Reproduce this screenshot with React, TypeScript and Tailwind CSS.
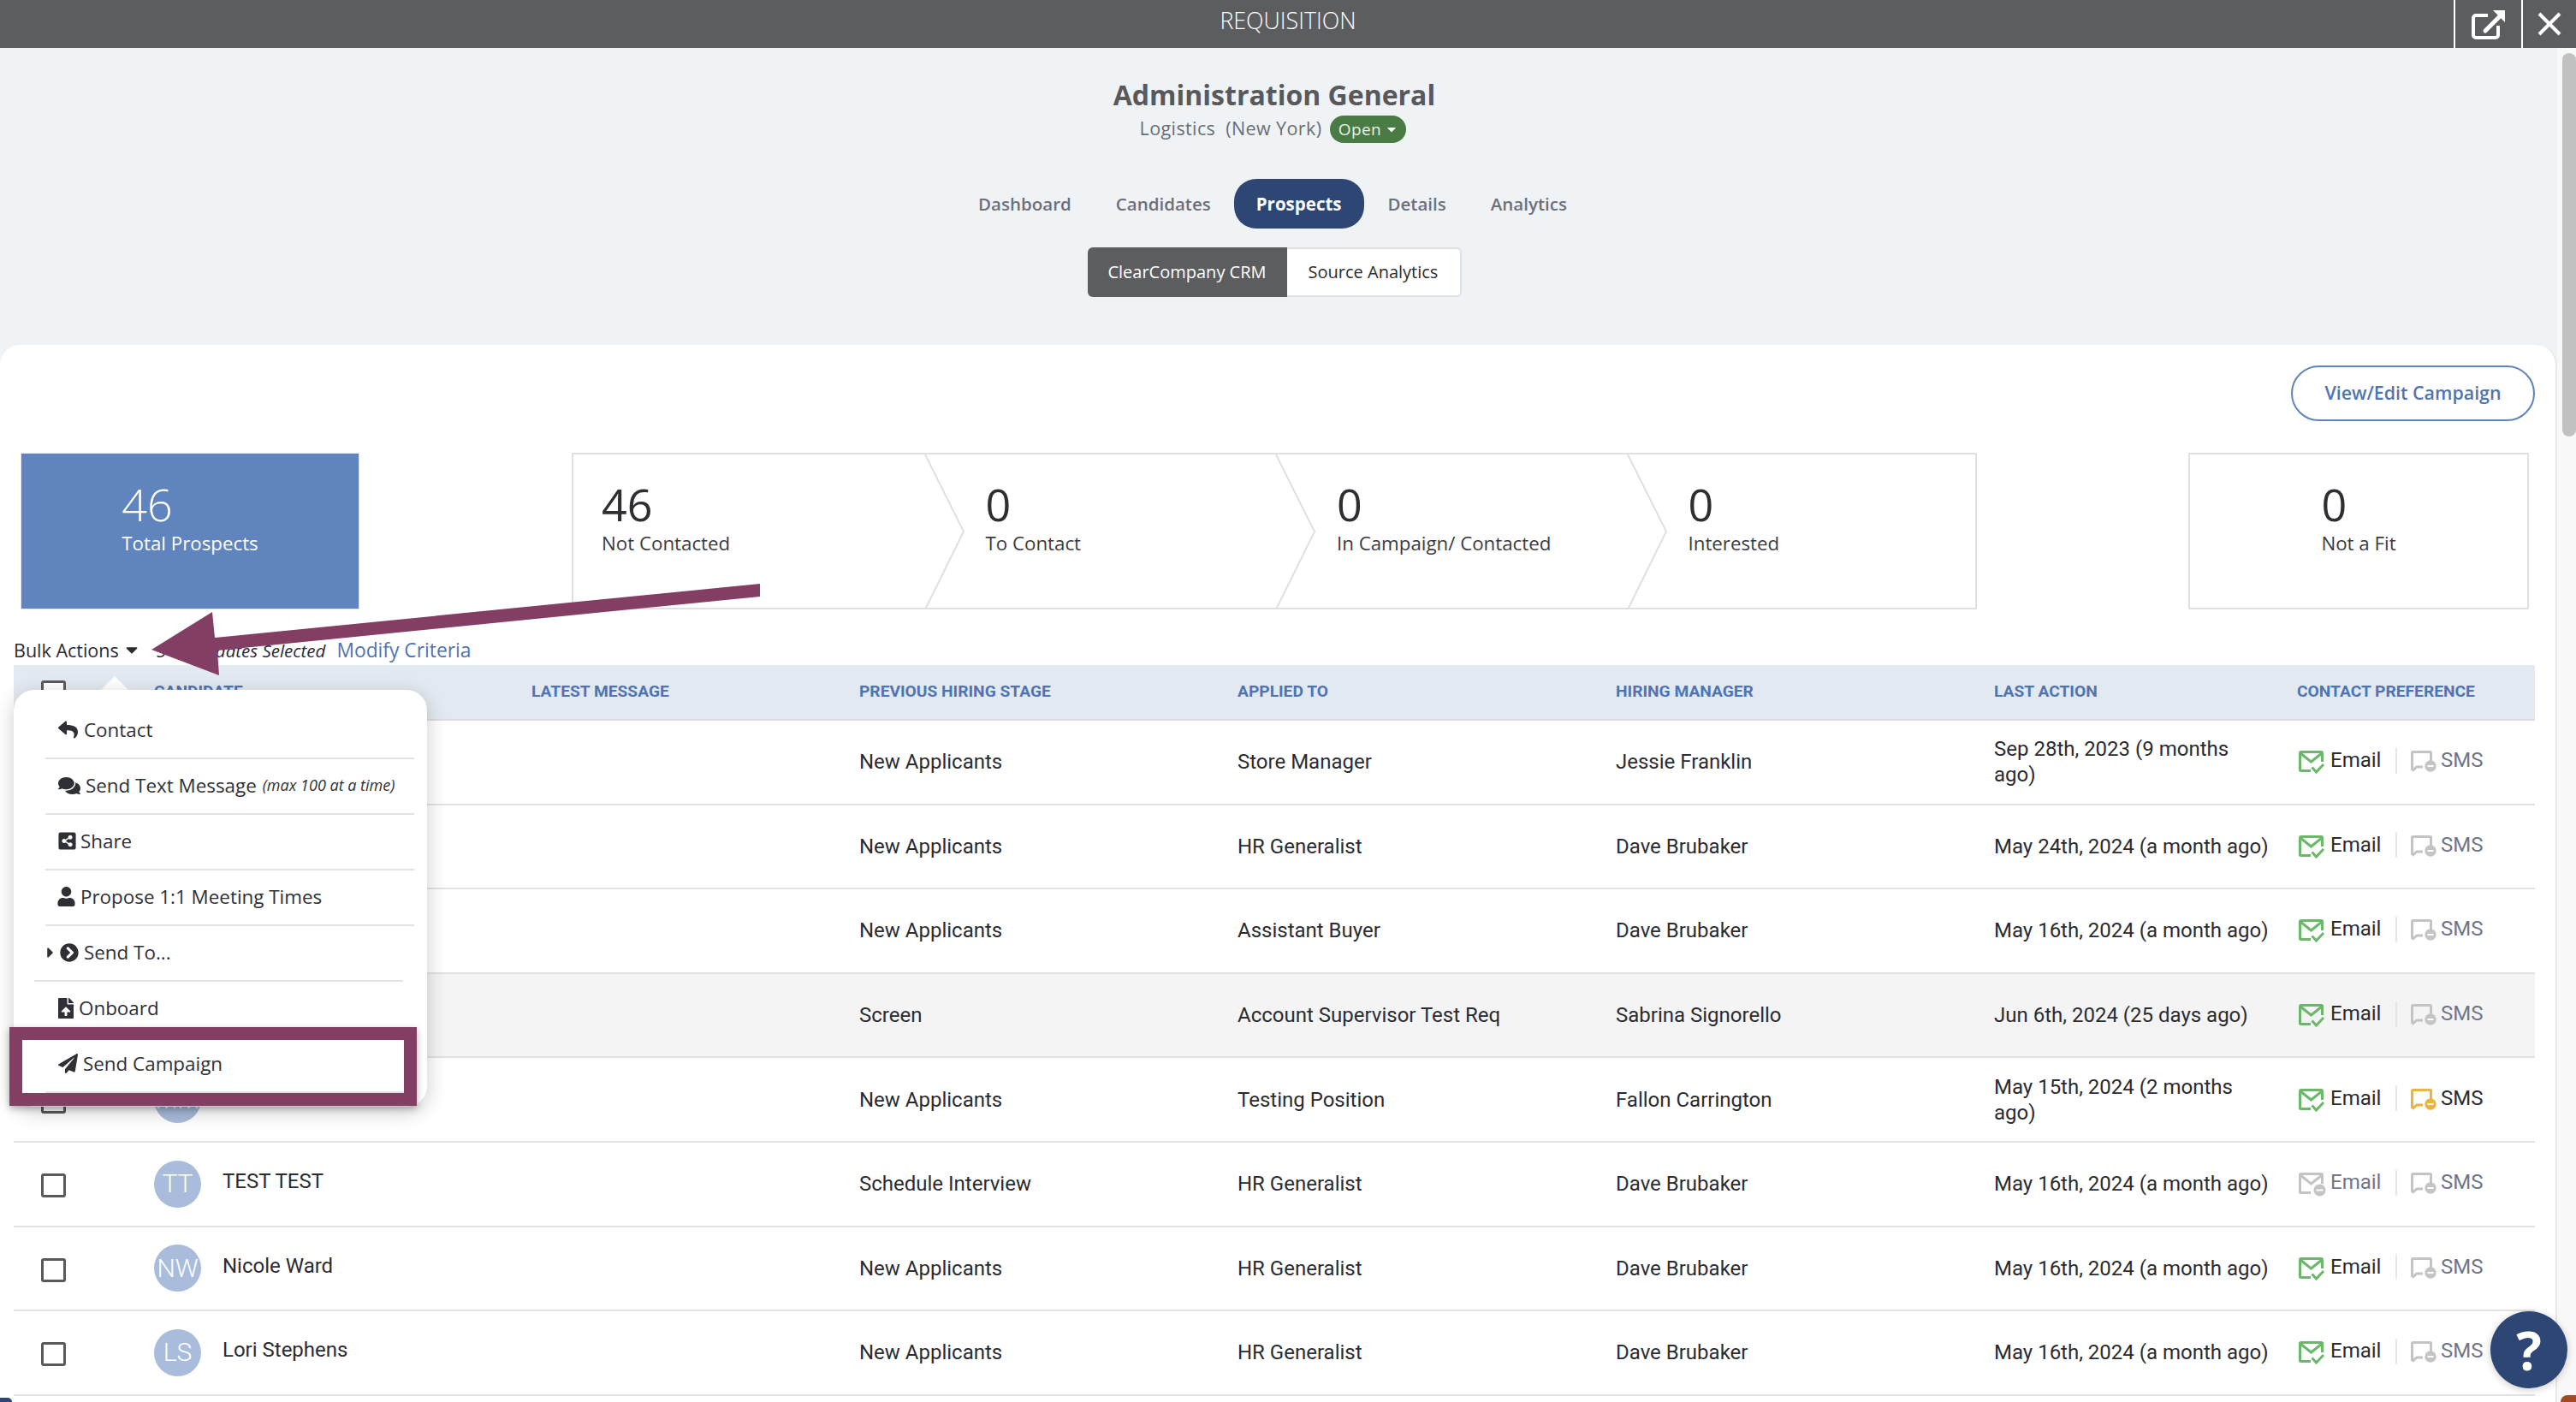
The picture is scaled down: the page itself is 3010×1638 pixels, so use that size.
import React from "react";
import {
  FaReply,
  FaComments,
  FaShareAltSquare,
  FaUser,
  FaChevronCircleRight,
  FaFileUpload,
  FaPaperPlane,
  FaCaretDown,
  FaCaretRight,
} from "react-icons/fa";

type Row = {
  initials?: string;
  name?: string;
  stage: string;
  applied: string;
  manager: string;
  date: string;
  emailOn: boolean;
  sms: "off" | "warn";
  muted?: boolean;
};

const rows: Row[] = [
  { stage: "New Applicants", applied: "Store Manager", manager: "Jessie Franklin", date: "Sep 28th, 2023 (9 months ago)", emailOn: true, sms: "off" },
  { stage: "New Applicants", applied: "HR Generalist", manager: "Dave Brubaker", date: "May 24th, 2024 (a month ago)", emailOn: true, sms: "off" },
  { stage: "New Applicants", applied: "Assistant Buyer", manager: "Dave Brubaker", date: "May 16th, 2024 (a month ago)", emailOn: true, sms: "off" },
  { stage: "Screen", applied: "Account Supervisor Test Req", manager: "Sabrina Signorello", date: "Jun 6th, 2024 (25 days ago)", emailOn: true, sms: "off", muted: true },
  { initials: "MM", stage: "New Applicants", applied: "Testing Position", manager: "Fallon Carrington", date: "May 15th, 2024 (2 months ago)", emailOn: true, sms: "warn" },
  { initials: "TT", name: "TEST TEST", stage: "Schedule Interview", applied: "HR Generalist", manager: "Dave Brubaker", date: "May 16th, 2024 (a month ago)", emailOn: false, sms: "off" },
  { initials: "NW", name: "Nicole Ward", stage: "New Applicants", applied: "HR Generalist", manager: "Dave Brubaker", date: "May 16th, 2024 (a month ago)", emailOn: true, sms: "off" },
  { initials: "LS", name: "Lori Stephens", stage: "New Applicants", applied: "HR Generalist", manager: "Dave Brubaker", date: "May 16th, 2024 (a month ago)", emailOn: true, sms: "off" },
];

function EmailIcon({ on }: { on: boolean }) {
  const c = on ? "#6cb86a" : "#c4c4c4";
  return (
    <svg width="32" height="28" viewBox="0 0 32 28" fill="none" className="shrink-0 mt-[2px]">
      <path d="M14 23.5H2.5a1 1 0 0 1-1-1V2.5a1 1 0 0 1 1-1h24a1 1 0 0 1 1 1V13" stroke={c} strokeWidth="3" />
      <path d="M2 3l12.5 10L27 3" stroke={c} strokeWidth="3" />
      {on ? (
        <path d="M15.5 19.5l5 5.5 8.5-9" stroke={c} strokeWidth="3" />
      ) : (
        <>
          <circle cx="24.5" cy="20.5" r="7" fill={c} />
          <path d="M20.5 20.5h8" stroke="#fff" strokeWidth="2" />
        </>
      )}
    </svg>
  );
}

function SmsIcon({ warn }: { warn: boolean }) {
  const c = warn ? "#eab440" : "#c4c4c4";
  return (
    <svg width="30" height="26" viewBox="0 0 30 26" fill="none" className="shrink-0">
      <path d="M1.5 23V2.5a1 1 0 0 1 1-1h20a1 1 0 0 1 1 1V12" stroke={c} strokeWidth="3" />
      <path d="M1.5 23.5L7 19h7" stroke={c} strokeWidth="3" />
      <circle cx="23" cy="18" r="6.7" fill={c} />
      <path d="M19.5 18h7" stroke="#fff" strokeWidth="2" />
    </svg>
  );
}

function Row({ r }: { r: Row }) {
  return (
    <div
      className={`grid grid-cols-[164px_441px_383px_442px_442px_442px_354px_278px] h-[98.6px] items-center border-b-2 border-[#e2e2e2] font-['Roboto',sans-serif] text-[24px] leading-[30px] text-[#2a2c32] ${
        r.muted ? "bg-[#f4f4f4]" : ""
      }`}
    >
      <div className="pl-[32px] pt-[4px]">
        <div className="w-[29px] h-[28px] border-[3px] border-[#5a5a5a] rounded-[3px] bg-white" />
      </div>
      <div className="flex items-center">
        {r.initials ? (
          <div className="w-[55px] h-[55px] rounded-full bg-[#a9bcdb] text-white text-[30px] font-light flex items-center justify-center shrink-0 overflow-hidden">
            {r.initials}
          </div>
        ) : null}
        {r.name ? <span className="ml-[25px] mb-[6px]">{r.name}</span> : null}
      </div>
      <div />
      <div>{r.stage}</div>
      <div>{r.applied}</div>
      <div>{r.manager}</div>
      <div className="pr-[30px]">{r.date}</div>
      <div className="flex items-center pl-[2px]">
        <EmailIcon on={r.emailOn} />
        <span className={`ml-[5px] mb-[4px] w-[59px] ${r.emailOn ? "" : "text-[#707689]"}`}>Email</span>
        <div className="w-[2px] h-[30px] bg-[#e6e6e6] ml-[17px] mr-[16px] mb-[3px]" />
        <SmsIcon warn={r.sms === "warn"} />
        <span className={`ml-[5px] mb-[4px] ${r.sms === "warn" ? "" : "text-[#707689]"}`}>SMS</span>
      </div>
    </div>
  );
}

function Stage({ value, label, first, last }: { value: string; label: string; first?: boolean; last?: boolean }) {
  return (
    <div
      className={`relative ${first ? "w-[413px] pl-[33px]" : last ? "w-[405px] pl-[69px]" : "w-[411px] pl-[69px]"} h-full pt-[27px]`}
    >
      <div className="text-[52px] leading-[62px] text-[#2e2f33]">{value}</div>
      <div className="text-[22.3px] leading-[30px] text-[#3a3b40]">{label}</div>
      {last ? null : (
        <svg className={`absolute ${first ? "left-[410px]" : "left-[408px]"} top-0`} width="50" height="181" viewBox="0 0 50 181" fill="none">
          <path d="M1 0L46 90L1 181" stroke="#e0e0e0" strokeWidth="2" />
        </svg>
      )}
    </div>
  );
}

const menuBase = "flex items-center h-[65px] pb-[2px] border-b-2 border-[#e2e2e2] text-[22.4px] text-[#2e3036]";

export default function App() {
  return (
    <div className="relative w-[3010px] h-[1638px] overflow-hidden bg-[#eff3f6] font-['Open_Sans',sans-serif]">
      <header className="grid grid-cols-[1fr_auto_1fr] items-center h-14 bg-[#5c5d5f] text-white">
        <div />
        <div className="text-[26.8px] font-light mb-[8px]">REQUISITION</div>
        <div className="flex justify-end h-full">
          <button className="w-[79px] h-full border-l-2 border-white flex items-center justify-center">
            <svg width="40" height="35" viewBox="0 0 40 35" fill="none">
              <path d="M19 7H5a3 3 0 0 0-3 3v20a3 3 0 0 0 3 3h23a3 3 0 0 0 3-3V19" stroke="#fff" strokeWidth="4" />
              <path d="M16 25L33 8" stroke="#fff" strokeWidth="5" strokeLinecap="round" />
              <path d="M25 1h14v14z" fill="#fff" />
            </svg>
          </button>
          <button className="w-[64px] h-full border-l-2 border-white flex items-center justify-center">
            <svg width="28" height="28" viewBox="0 0 28 28" fill="none">
              <path d="M2 2l24 24M26 2L2 26" stroke="#fff" strokeWidth="4" />
            </svg>
          </button>
        </div>
      </header>

      <div className="flex h-[1582px]">
        <main className="w-[2988px] shrink-0">
          <section className="h-[347px] pr-[10px] pt-[33px] flex flex-col items-center">
            <h1 className="text-[32px] leading-[44px] font-bold text-[#58595b]">Administration General</h1>
            <div className="flex items-center h-[32px] mr-[3px] text-[21.5px] text-[#6b6e75] tracking-[0.4px]">
              <span className="whitespace-pre mt-[2px]">Logistics  (New York)</span>
              <span className="ml-[10px] mt-[4px] h-[32px] w-[89px] rounded-full bg-[#4a7b45] text-[#e8f2e6] text-[19px] flex items-center justify-center">
                Open
                <FaCaretDown className="ml-[4px] text-white" size={16} />
              </span>
            </div>
            <nav className="flex items-center mt-[44px] mr-[4px] h-[58px] text-[20.5px] font-semibold text-[#6c6f7a]">
              <a className="pl-[26px] pr-[26px]">Dashboard</a>
              <a className="pl-[26px] pr-[27px]">Candidates</a>
              <a className="px-[26px] h-full flex items-center rounded-[26px] bg-[#2d4674] text-white font-bold">Prospects</a>
              <a className="pl-[28px] pr-[26px]">Details</a>
              <a className="px-[26px]">Analytics</a>
            </nav>
            <div className="flex mt-[22px] h-[58px] text-[20px]">
              <button className="w-[233px] rounded-l-[6px] bg-[#5c5d5f] text-white">ClearCompany CRM</button>
              <button className="w-[204px] rounded-r-[6px] bg-white border-2 border-l-0 border-[#dfe1e3] text-[#2b2c30]">Source Analytics</button>
            </div>
          </section>

          <section className="h-[1235px] bg-white rounded-t-[24px] border-r-2 border-[#e8e8e8] pt-[24px]">
            <div className="flex justify-end pr-[24px]">
              <button className="w-[285px] h-[65px] rounded-full border-2 border-[#5f83bd] text-[21.4px] font-semibold text-[#4f74b3]">
                View/Edit Campaign
              </button>
            </div>

            <div className="flex h-[183px] mt-[37px] ml-[24px]">
              <div className="w-[396px] h-full bg-[#6084bd] border border-[#e0e4ea] text-white flex justify-center pt-[28px]">
                <div>
                  <div className="text-[52px] leading-[62px] font-light">46</div>
                  <div className="text-[22.3px] leading-[30px]">Total Prospects</div>
                </div>
              </div>
              <div className="flex w-[1642px] ml-[248px] h-full border-2 border-[#e0e0e0]">
                <Stage value="46" label="Not Contacted" first />
                <Stage value="0" label="To Contact" />
                <Stage value="0" label="In Campaign/ Contacted" />
                <Stage value="0" label="Interested" last />
              </div>
              <div className="w-[398px] ml-[247px] h-full border-2 border-[#e0e0e0] flex justify-center pt-[27px]">
                <div>
                  <div className="text-[52px] leading-[62px] text-[#2e2f33]">0</div>
                  <div className="text-[22.3px] leading-[30px] text-[#3a3b40]">Not a Fit</div>
                </div>
              </div>
            </div>

            <div className="flex items-end h-[65px] pl-[16px] pb-[2px] text-[21.5px] leading-[30px]">
              <span className="text-[#2a2c32]">Bulk Actions</span>
              <FaCaretDown className="ml-[4px] mb-[5px] text-[#2a2c32]" size={22} />
              <span className="ml-[18px] italic text-[20.5px] text-[#2a2c32]">5 Candidates Selected</span>
              <span className="ml-[13px] text-[22.8px] text-[#4f74b3]">Modify Criteria</span>
            </div>

            <div className="mx-[16px] w-[2946px]">
              <div className="grid grid-cols-[164px_441px_383px_442px_442px_442px_354px_278px] h-[65px] items-center bg-[#e3e9f0] border-b-2 border-[#d9dde2] font-['Roboto',sans-serif] text-[19.2px] font-bold text-[#4f74b3]">
                <div className="pl-[32px]">
                  <div className="w-[29px] h-[28px] border-[3px] border-[#5a5a5a] rounded-[3px] bg-white" />
                </div>
                <div>CANDIDATE</div>
                <div>LATEST MESSAGE</div>
                <div>PREVIOUS HIRING STAGE</div>
                <div>APPLIED TO</div>
                <div>HIRING MANAGER</div>
                <div>LAST ACTION</div>
                <div>CONTACT PREFERENCE</div>
              </div>
              {rows.map((r, i) => (
                <Row key={i} r={r} />
              ))}
            </div>
          </section>
        </main>
        <aside className="flex-1 bg-[#f8f8f8] pl-[6px] pt-[6px]">
          <div className="w-[16px] h-[448px] rounded-full bg-[#c1c1c1]" />
        </aside>
      </div>

      {/* dropdown menu */}
      <div className="absolute left-[118px] top-[790px] w-0 h-0 border-x-[16px] border-x-transparent border-b-[16px] border-b-white" />
      <div className="absolute left-[16px] top-[806px] w-[483px] h-[487px] bg-white rounded-[24px] shadow-[0_6px_24px_rgba(0,0,0,0.2)] pt-[16px] pl-[37px] pr-[15px]">
        <div className={menuBase}>
          <FaReply className="ml-[15px] mr-[7px]" size={23} />
          Contact
        </div>
        <div className={menuBase}>
          <FaComments className="ml-[15px] mr-[6px]" size={26} />
          <span>Send Text Message</span>
          <span className="ml-[7px] italic text-[18px]">(max 100 at a time)</span>
        </div>
        <div className={menuBase}>
          <FaShareAltSquare className="ml-[14px] mr-[4px]" size={23} />
          Share
        </div>
        <div className={menuBase}>
          <FaUser className="ml-[13px] mr-[5px]" size={23} />
          Propose 1:1 Meeting Times
        </div>
        <div className={`${menuBase} -ml-[13px] mr-[13px]`}>
          <FaCaretRight className="ml-[9px]" size={20} />
          <FaChevronCircleRight className="ml-[1px] mr-[6px]" size={22} />
          Send To...
        </div>
        <div className={menuBase}>
          <FaFileUpload className="ml-[12px] mr-[3px]" size={24} />
          Onboard
        </div>
        <div className={menuBase}>
          <FaPaperPlane className="ml-[15px] mr-[6px]" size={23} />
          Send Campaign
        </div>
      </div>

      {/* annotation overlays */}
      <div className="absolute left-[11px] top-[1200px] w-[476px] h-[92px] border-[15px] border-[#833f63] shadow-[0_3px_8px_rgba(0,0,0,0.3)]" />
      <svg className="absolute left-[170px] top-[675px]" width="725" height="120" viewBox="170 675 725 120">
        <polygon points="888,682 888,697 254,760 256,789 177,759 248,715 251,745" fill="#833f63" />
      </svg>

      {/* help */}
      <button className="absolute left-[2910px] top-[1532px] w-[90px] h-[90px] rounded-full bg-[#2d4674] text-white text-[62px] font-bold flex items-center justify-center shadow-[0_2px_10px_rgba(0,0,0,0.2)]">
        ?
      </button>

      {/* window corners */}
      <div className="absolute left-0 top-[1633px] w-[14px] h-[5px] bg-[#2d4674] rounded-tr-[14px]" />
      <div className="absolute left-[2992px] top-[1630px] w-[18px] h-[8px] bg-[#a34a22] rounded-tl-[16px]" />
    </div>
  );
}
